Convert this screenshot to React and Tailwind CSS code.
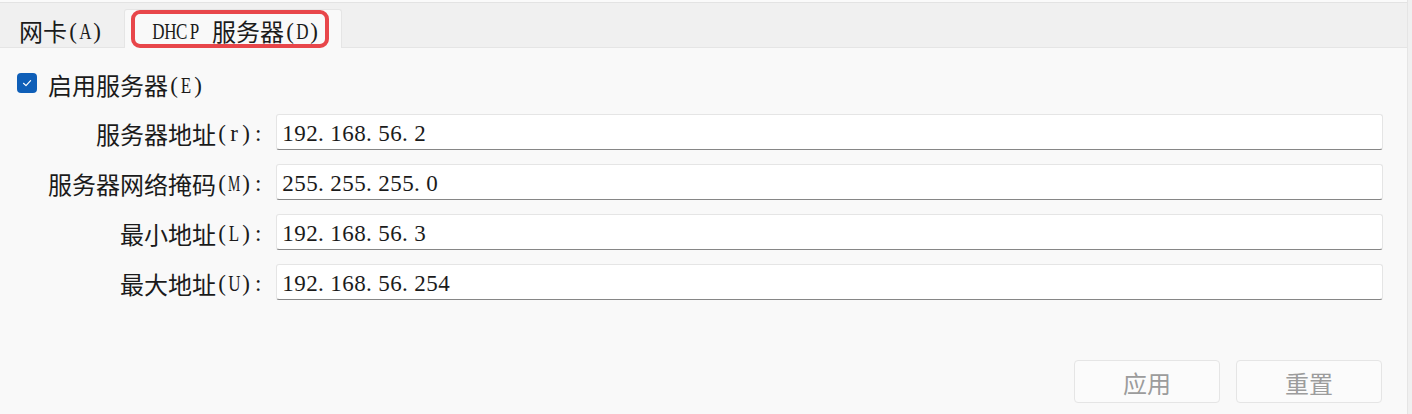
import React from 'react';

const CJK = /[\u3000-\u9fff\uff00-\uffef]/;

// latin glyphs live in half-width cells; wide capitals get squeezed to fit like the original UI font
function cellClass(c) {
  if (c === 'M' || c === 'W') return 'scale-x-[0.6]';
  if (/[A-Z]/.test(c)) return 'scale-x-[0.74]';
  return '';
}

function Txt({ s }) {
  const parts = s.split(/([\u3000-\u9fff\uff00-\uffef]+)/).filter(Boolean);
  return (
    <>
      {parts.map((p, i) =>
        CJK.test(p) ? (
          <span key={i} className="font-['Noto_Sans_CJK_SC',sans-serif] text-[24px] leading-none">
            {p}
          </span>
        ) : (
          <span key={i} className="inline-flex font-['Liberation_Serif',serif] text-[23px] leading-none">
            {p.split('').map((c, j) => (
              <span
                key={j}
                className={`inline-flex w-[12px] ${c === '.' ? 'justify-start' : c === ':' ? 'justify-start pl-[3px]' : 'justify-center'}`}
              >
                <span className={`inline-block whitespace-nowrap ${cellClass(c)}`}>
                  {c === ' ' ? '\u00a0' : c}
                </span>
              </span>
            ))}
          </span>
        )
      )}
    </>
  );
}

const rows = [
  { label: '服务器地址(r):', value: '192.168.56.2' },
  { label: '服务器网络掩码(M):', value: '255.255.255.0' },
  { label: '最小地址(L):', value: '192.168.56.3' },
  { label: '最大地址(U):', value: '192.168.56.254' },
];

export default function App() {
  return (
    <div className="w-[1412px] h-[414px] flex bg-[#f0f0f0] text-[#1b1b1b] overflow-hidden">
      <div className="w-[1408px] h-full flex flex-col bg-[#f9f9f9] border-r border-[#e5e5e5]">
        {/* top edge */}
        <div className="h-[3px] bg-[#fafafa] border-b border-[#e3e3e3]" />

        {/* tab strip */}
        <div className="h-[45px] flex items-end bg-[#f0f0f0] border-b border-[#e5e5e5]">
          <div className="w-[124px] h-[38px] flex items-center pl-[19px] pt-[6px]">
            <Txt s="网卡(A)" />
          </div>
          <div className="relative w-[218px] h-[39px] -mb-px flex items-center pl-[27px] pt-[4px] bg-[#f9f9f9] border border-b-0 border-[#e5e5e5] rounded-t-[3px]">
            <Txt s="DHCP 服务器(D)" />
            <div className="absolute left-[6px] top-[0px] w-[198px] h-[38px] border-[4px] border-[#e8464a] rounded-[9px]" />
          </div>
        </div>

        {/* content */}
        <div className="flex-1 flex flex-col pl-[17px] pr-[24px]">
          <div className="mt-[25px] h-[20px] flex items-center gap-[11px]">
            <div className="w-[20px] h-[20px] rounded-[4px] bg-[#0f5fb8] flex items-center justify-center">
              <svg width="12" height="12" viewBox="0 0 12 12" fill="none">
                <path d="M2.5 6.3 L5 8.6 L9.6 3.6" stroke="white" strokeWidth="1.2" strokeLinecap="round" strokeLinejoin="round" />
              </svg>
            </div>
            <div className="flex items-center pt-[4px]">
              <Txt s="启用服务器(E)" />
            </div>
          </div>

          <div className="mt-[21px] flex flex-col gap-[14px]">
            {rows.map((r) => (
              <div key={r.label} className="flex items-center">
                <div className="w-[248px] flex items-center justify-end pr-[1px] pt-[3px]">
                  <Txt s={r.label} />
                </div>
                <div className="ml-[11px] flex-1 h-[36px] flex items-center pl-[5px] pt-[3px] bg-white border border-[#e5e5e5] border-b-[#868686] rounded-[3px]">
                  <Txt s={r.value} />
                </div>
              </div>
            ))}
          </div>

          <div className="mt-[60px] flex justify-end gap-[16px] pr-[1px]">
            <button className="w-[146px] h-[43px] flex items-center justify-center pt-[2px] bg-[#fbfbfb] border border-[#e5e5e5] rounded-[4px] text-[#9c9c9c]">
              <Txt s="应用" />
            </button>
            <button className="w-[146px] h-[43px] flex items-center justify-center pt-[2px] bg-[#fbfbfb] border border-[#e5e5e5] rounded-[4px] text-[#9c9c9c]">
              <Txt s="重置" />
            </button>
          </div>
        </div>
      </div>
    </div>
  );
}
